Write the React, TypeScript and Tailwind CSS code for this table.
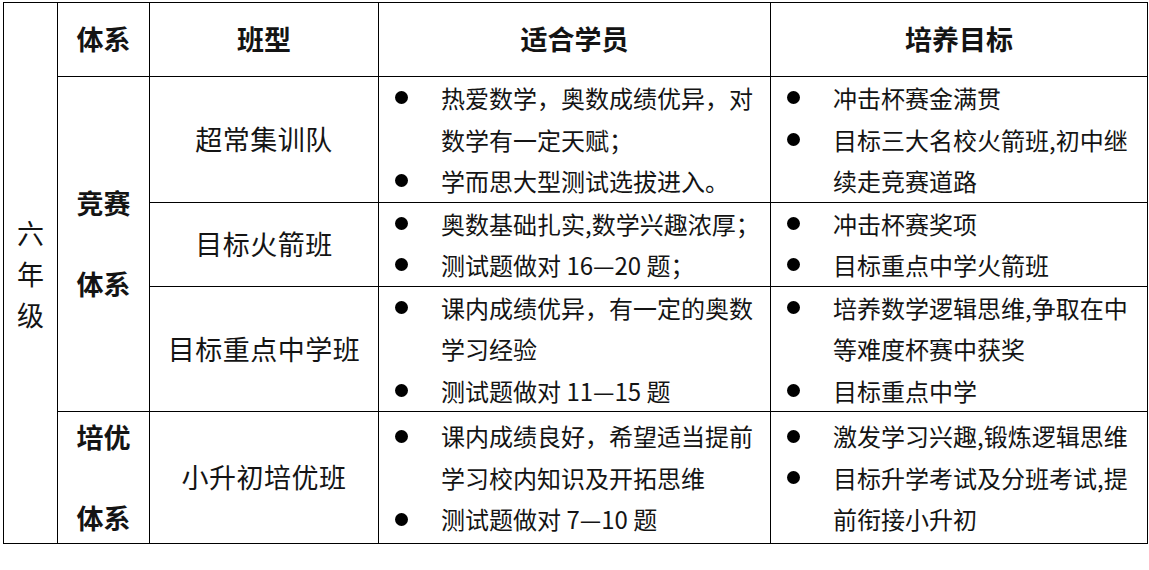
import React from "react";

type Row = {
  cls: string;
  h: string;
  fit: string[][];
  goal: string[][];
};

const rows: Row[] = [
  {
    cls: "超常集训队",
    h: "h-[125px]",
    fit: [["热爱数学，奥数成绩优异，对", "数学有一定天赋；"], ["学而思大型测试选拔进入。"]],
    goal: [["冲击杯赛金满贯"], ["目标三大名校火箭班,初中继", "续走竞赛道路"]],
  },
  {
    cls: "目标火箭班",
    h: "h-[84px]",
    fit: [["奥数基础扎实,数学兴趣浓厚；"], ["测试题做对 16—20 题；"]],
    goal: [["冲击杯赛奖项"], ["目标重点中学火箭班"]],
  },
  {
    cls: "目标重点中学班",
    h: "h-[125px]",
    fit: [["课内成绩优异，有一定的奥数", "学习经验"], ["测试题做对 11—15 题"]],
    goal: [["培养数学逻辑思维,争取在中", "等难度杯赛中获奖"], ["目标重点中学"]],
  },
  {
    cls: "小升初培优班",
    h: "h-[132px]",
    fit: [["课内成绩良好，希望适当提前", "学习校内知识及开拓思维"], ["测试题做对 7—10 题"]],
    goal: [["激发学习兴趣,锻炼逻辑思维"], ["目标升学考试及分班考试,提", "前衔接小升初"]],
  },
];

function Bullets({ items }: { items: string[][] }) {
  return (
    <div className="flex flex-col">
      {items.map((lines, i) => (
        <div key={i} className="flex">
          <div className="w-[62px] shrink-0 pl-[16px] h-[41.5px] flex items-center">
            <span className="block w-[13px] h-[13px] rounded-full bg-black" />
          </div>
          <div className="flex flex-col">
            {lines.map((l) => (
              <span key={l} className="whitespace-nowrap text-[24px] leading-[41.5px]">
                {l}
              </span>
            ))}
          </div>
        </div>
      ))}
    </div>
  );
}

const cell = "border border-black p-0 align-middle";

export default function App() {
  return (
    <div className="min-h-screen bg-white pt-[2px] pl-[3px] font-['Noto_Sans_CJK_SC',sans-serif] text-[#141414]">
      <table className="table-fixed w-[1144px]">
        <colgroup>
          <col className="w-[54px]" />
          <col className="w-[92px]" />
          <col className="w-[229px]" />
          <col className="w-[392px]" />
          <col className="w-[377px]" />
        </colgroup>
        <tbody>
          <tr className="h-[74px]">
            <td rowSpan={5} className={`${cell} text-center text-[27px] leading-[41px]`}>
              六<br />年<br />级
            </td>
            <th className={`${cell} text-center text-[27px] font-semibold`}>体系</th>
            <th className={`${cell} text-center text-[27px] font-semibold`}>班型</th>
            <th className={`${cell} text-center text-[27px] font-semibold`}>适合学员</th>
            <th className={`${cell} text-center text-[27px] font-semibold`}>培养目标</th>
          </tr>
          {rows.map((r, i) => (
            <tr key={r.cls} className={r.h}>
              {i === 0 && (
                <td rowSpan={3} className={`${cell} text-center text-[27px] font-semibold leading-[40.5px]`}>
                  竞赛<br /><br />体系
                </td>
              )}
              {i === 3 && (
                <td className={`${cell} text-center text-[27px] font-semibold leading-[40.5px]`}>
                  培优<br /><br />体系
                </td>
              )}
              <td className={`${cell} text-center text-[27px] tracking-[0.5px]`}>{r.cls}</td>
              <td className={cell}>
                <Bullets items={r.fit} />
              </td>
              <td className={cell}>
                <Bullets items={r.goal} />
              </td>
            </tr>
          ))}
        </tbody>
      </table>
    </div>
  );
}
